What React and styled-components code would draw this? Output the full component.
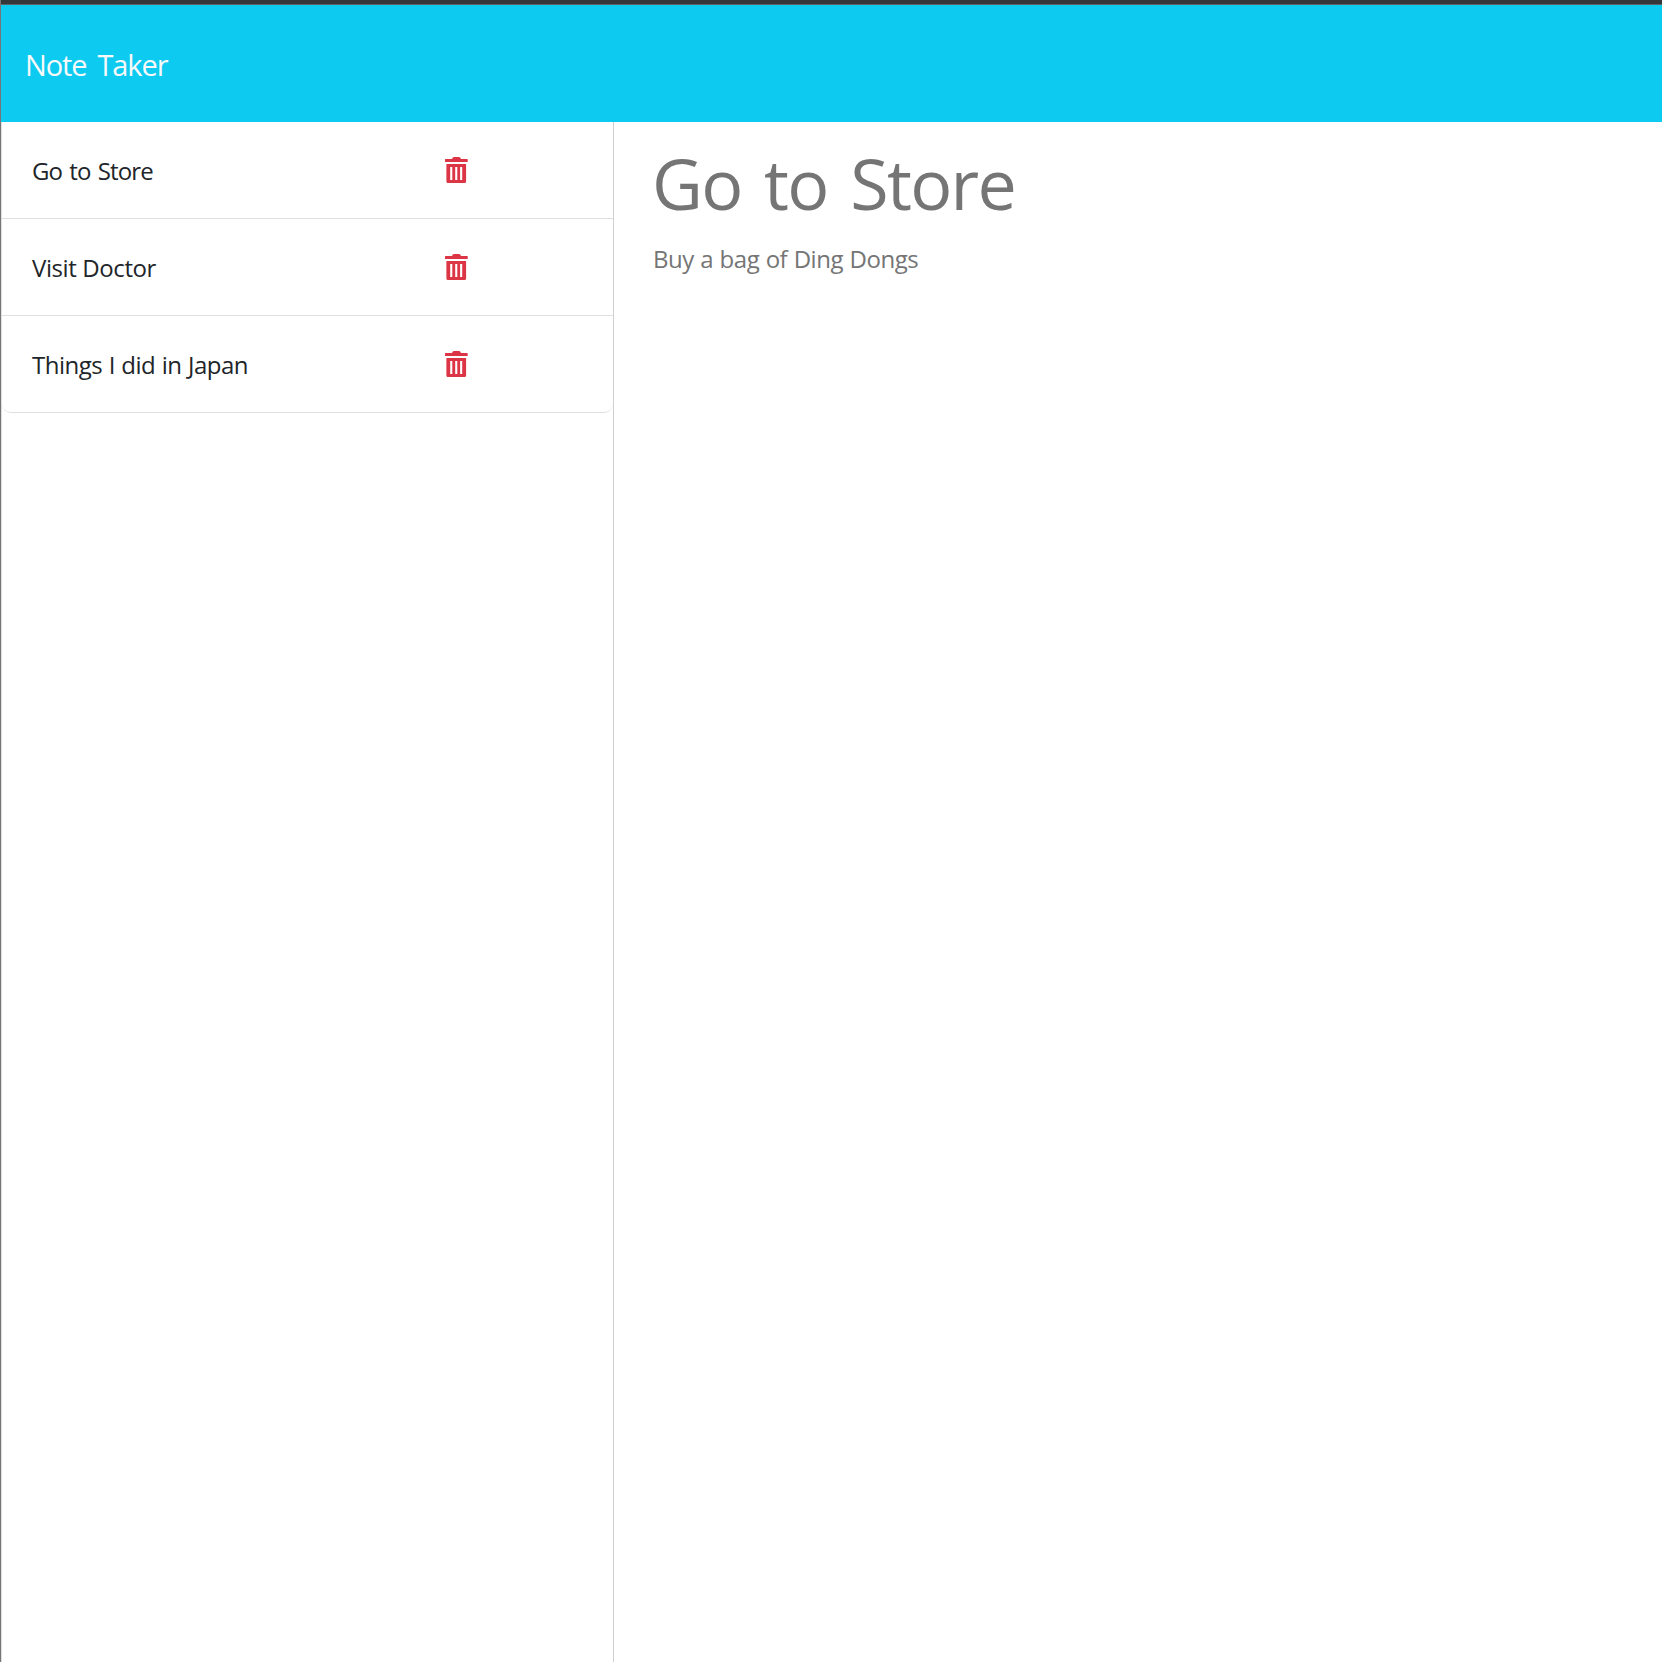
import React from "react";
import styled, { createGlobalStyle } from "styled-components";

const GlobalStyle = createGlobalStyle`
  *, *::before, *::after { box-sizing: border-box; }
  body {
    margin: 0;
    background: #fff;
    font-family: "Open Sans", "Noto Sans", sans-serif;
    font-size: 24px;
    line-height: 36px;
    color: #212529;
  }
`;

const Page = styled.div`
  display: flex;
  flex-direction: column;
  height: 100vh;
  overflow: hidden;
  border-left: 1px solid #767676;
`;

const WindowEdge = styled.div`
  flex: none;
  height: 5px;
  background: #35363a;
  border-bottom: 1px solid #5f6064;
`;

const Navbar = styled.header`
  flex: none;
  display: flex;
  align-items: center;
  height: 117px;
  padding: 1px 24px 0;
  background: #0dcaf0;
`;

const Brand = styled.span`
  font-size: 29px;
  line-height: 45px;
  letter-spacing: -1.1px;
  word-spacing: 4.5px;
  color: #f8f9fa;
  white-space: nowrap;
`;

const Main = styled.main`
  flex: 1;
  display: flex;
  min-height: 0;
`;

const Sidebar = styled.aside`
  flex: none;
  width: 613px;
  border-left: 1px solid #dfdfdf;
  border-right: 1px solid #d0d0d0;
`;

const NoteList = styled.ul`
  list-style: none;
  margin: 0;
  padding: 0;
`;

const NoteItem = styled.li`
  display: flex;
  align-items: center;
  height: 97px;
  padding: 2px 0 0 30px;
  border-bottom: 1px solid #dfdfdf;

  &:last-child {
    border-radius: 0 0 9px 9px;
  }
`;

const NoteTitle = styled.span`
  flex: none;
  width: 413px;
  letter-spacing: ${(p) => p.$tracking}px;
  word-spacing: ${(p) => p.$wordGap}px;
  white-space: nowrap;
`;

const DeleteButton = styled.button`
  display: flex;
  margin: 0 0 3px;
  padding: 0;
  border: 0;
  background: none;
  color: #dc3545;
  cursor: pointer;

  svg { display: block; }
`;

const Editor = styled.section`
  flex: 1;
  display: flex;
  flex-direction: column;
  padding: 18px 39px;
  color: #757575;
`;

const Heading = styled.h1`
  margin: 0 0 15px -1px;
  font-size: 70px;
  font-weight: 400;
  line-height: 86px;
  letter-spacing: -1.7px;
  word-spacing: 6px;
  white-space: nowrap;
`;

const Body = styled.p`
  margin: 0;
  letter-spacing: -0.45px;
  word-spacing: 0.6px;
`;

const notes = [
  { title: "Go to Store", tracking: -0.85, wordGap: 1.75 },
  { title: "Visit Doctor", tracking: -0.4, wordGap: 0 },
  { title: "Things I did in Japan", tracking: -0.5, wordGap: 0.75 },
];

const TrashIcon = () => (
  <svg width="23" height="26" viewBox="0 0 23 26" fill="currentColor" aria-hidden="true">
    <path d="M0.5 2H7L7.8 0.6Q8.2 0 9 0H14Q14.8 0 15.2 0.6L16 2H22.2Q22.7 2 22.7 2.5V5H0V2.5Q0 2 0.5 2Z" />
    <path
      fillRule="evenodd"
      d="M1.4 7H21.1V24.4Q21.1 26 19.5 26H3Q1.4 26 1.4 24.4ZM5.2 10V23H7.3V10ZM10.2 10V23H12.3V10ZM15.1 10V23H17.2V10Z"
    />
  </svg>
);

export default function App() {
  return (
    <Page>
      <GlobalStyle />
      <WindowEdge />
      <Navbar>
        <Brand>Note Taker</Brand>
      </Navbar>
      <Main>
        <Sidebar>
          <NoteList>
            {notes.map((n) => (
              <NoteItem key={n.title}>
                <NoteTitle $tracking={n.tracking} $wordGap={n.wordGap}>
                  {n.title}
                </NoteTitle>
                <DeleteButton aria-label="Delete note">
                  <TrashIcon />
                </DeleteButton>
              </NoteItem>
            ))}
          </NoteList>
        </Sidebar>
        <Editor>
          <Heading>Go to Store</Heading>
          <Body>Buy a bag of Ding Dongs</Body>
        </Editor>
      </Main>
    </Page>
  );
}
